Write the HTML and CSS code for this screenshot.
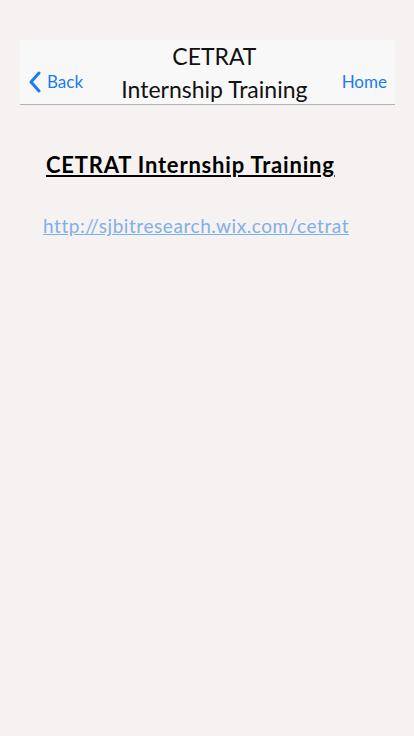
FILE: index.html
```html
<!DOCTYPE html>
<html>
<head>
<meta charset="utf-8">
<link rel="stylesheet" href="styles.css">
</head>
<body>
<div class="screen">
  <header class="navbar">
    <a class="nav-btn back">
      <svg class="chev" width="14" height="22" viewBox="0 0 14 22"><path d="M11 2 L3 11 L11 20" fill="none" stroke="#1a7cf5" stroke-width="3" stroke-linecap="round" stroke-linejoin="round"/></svg>
      <span>Back</span>
    </a>
    <div class="nav-title">CETRAT<br>Internship Training</div>
    <a class="nav-btn home">Home</a>
  </header>
  <main class="content">
    <h1 class="heading">CETRAT Internship Training</h1>
    <a class="link">http://sjbitresearch.wix.com/cetrat</a>
  </main>
</div>
</body>
</html>
```
FILE: styles.css
```css
html, body {
  margin: 0;
  padding: 0;
  background: #f5f2f1;
  font-family: Lato, "Open Sans", sans-serif;
}
.screen {
  width: 414px;
  height: 736px;
  padding: 40px 19px 0 20px;
  box-sizing: border-box;
}
.navbar {
  display: flex;
  align-items: center;
  justify-content: space-between;
  height: 65px;
  background: #f8f8f8;
  border-bottom: 1px solid #b2b2b2;
  box-sizing: border-box;
}
.nav-btn {
  color: #1a7cf5;
  font-size: 17px;
  display: flex;
  align-items: center;
  padding-top: 19px;
}
.back {
  padding-left: 8px;
  gap: 5px;
}
.home {
  padding-right: 8px;
}
.nav-title {
  text-align: center;
  font-size: 23px;
  line-height: 33px;
  color: #111;
  margin-top: 1px;
  margin-left: 4px;
}
.content {
  padding: 45px 0 0 26px;
}
.heading {
  margin: 0;
  font-size: 22px;
  font-weight: 700;
  letter-spacing: 0.8px;
  color: #000;
  text-decoration: underline;
  line-height: 30px;
}
.link {
  display: block;
  margin: 34px 0 0 -3px;
  font-size: 19px;
  letter-spacing: 0.57px;
  color: #7fb0e8;
  text-decoration: underline;
}
```
